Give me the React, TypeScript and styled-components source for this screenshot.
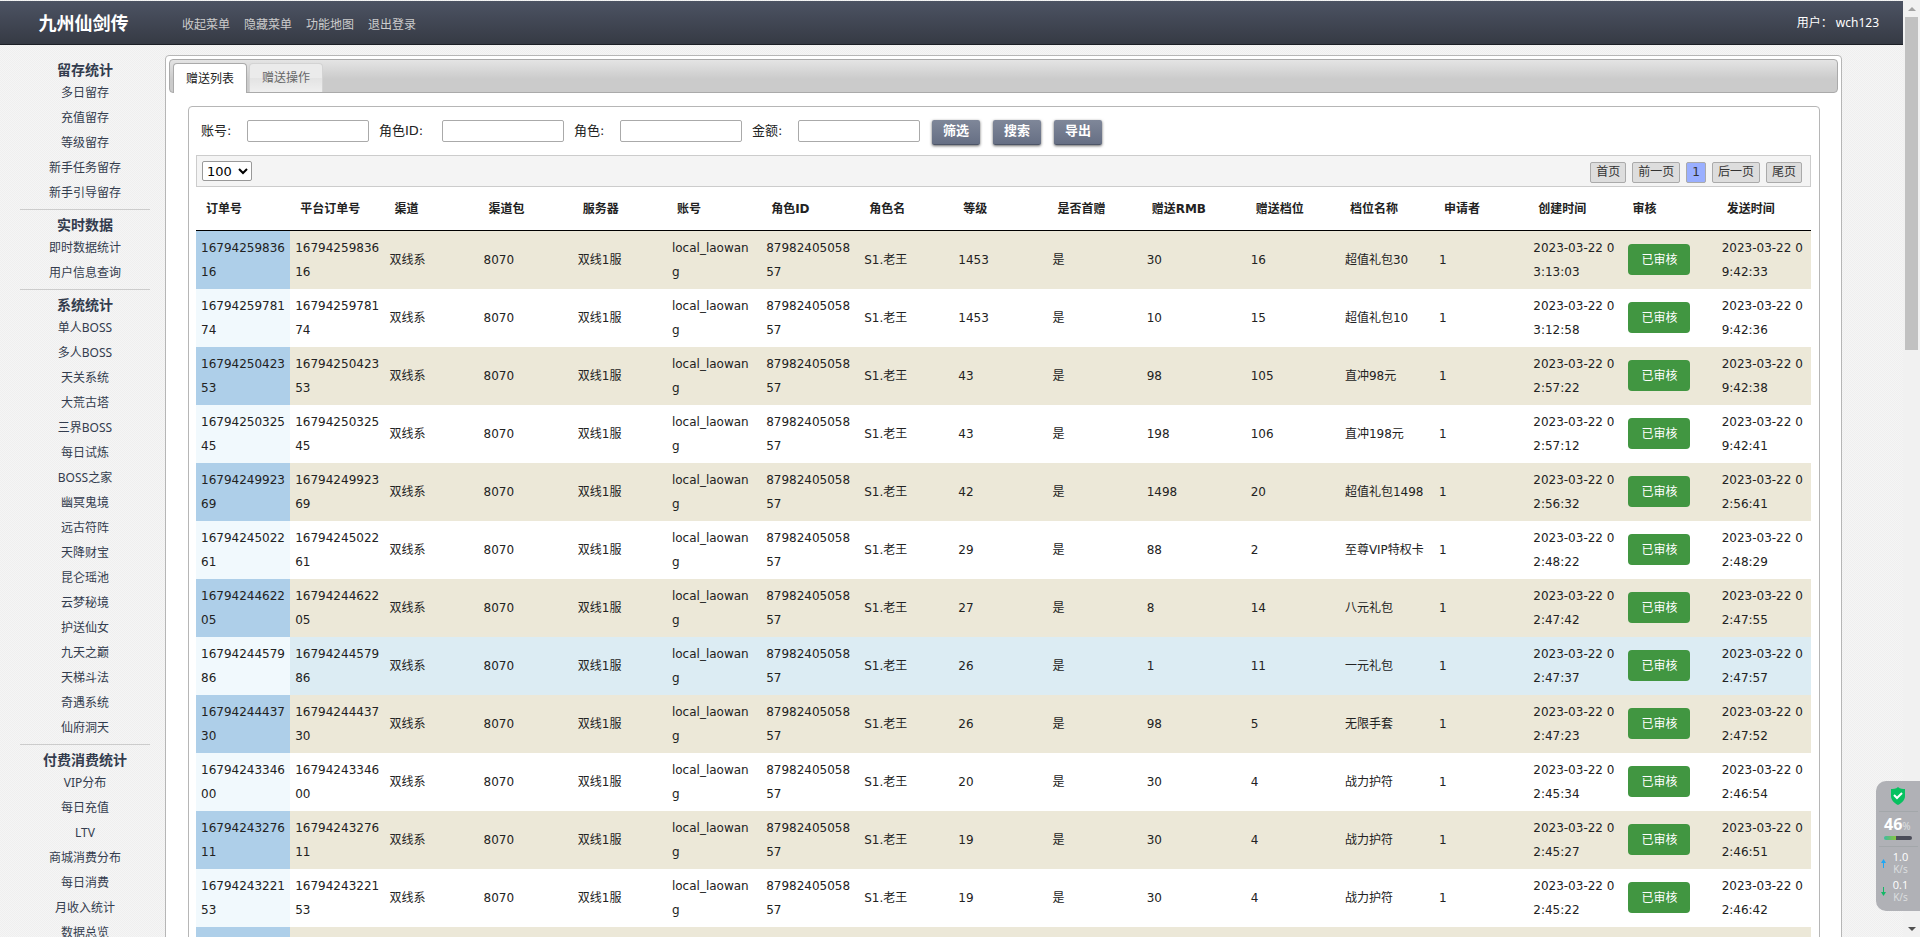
import React from 'react';
import styled, { createGlobalStyle } from 'styled-components';

const GlobalStyle = createGlobalStyle`
  * { box-sizing: border-box; }
  body {
    margin: 0;
    background: #f3f3f3;
    font-family: 'Noto Sans', 'Noto Sans CJK SC', sans-serif;
    font-size: 12px;
    color: #222;
  }
  a { color: inherit; text-decoration: none; }
`;

const wide = "'DejaVu Sans', 'Noto Sans CJK SC', sans-serif";

const Screen = styled.div`
  display: grid;
  grid-template-columns: minmax(0, 1fr) 17px;
  height: 100vh;
  overflow: hidden;
`;

const Page = styled.div`
  height: 100vh;
  padding-top: 1px;
  overflow: hidden;
  background: repeating-conic-gradient(#f5f5f5 0 25%, #efefef 0 50%) 0 0 / 2px 2px;
`;

const Header = styled.header`
  display: flex;
  align-items: center;
  height: 44px;
  padding: 0 24px 0 19px;
  border-bottom: 1px solid #1c1f26;
  background: linear-gradient(#4c5363, #363a44);
  color: #fff;
`;

const Brand = styled.h1`
  width: 129px;
  margin: 0;
  font-size: 18px;
  line-height: 24px;
  text-align: center;
`;

const TopNav = styled.nav`
  display: flex;
  flex: 1;
  gap: 14px;
  padding: 4px 0 0 34px;
  line-height: 18px;
  color: #ccc;
`;

const User = styled.div`
  line-height: 18px;
`;

const Body = styled.div`
  display: grid;
  grid-template-columns: 165px minmax(0, 1fr);
  padding-right: 61px;
`;

const Sidebar = styled.nav`
  padding: 15px 15px 0 20px;
  color: #333c4e;
  text-align: center;
`;

const Group = styled.section`
  margin-bottom: 5px;
  padding-bottom: 4px;
  border-bottom: 1px solid #ccc;
`;

const GroupTitle = styled.h2`
  margin: 0;
  font-size: 14px;
  line-height: 20px;
`;

const MenuLink = styled.a`
  display: block;
  line-height: 25px;
`;

const Panel = styled.main`
  margin-top: 10px;
  padding: 3px;
  border: 1px solid #b6b6b6;
  border-radius: 4px;
  background: #fff;
`;

const TabBar = styled.div`
  display: flex;
  gap: 2px;
  height: 34px;
  padding: 3px 3px 0;
  border: 1px solid #aaa;
  border-radius: 4px;
  background: linear-gradient(#e4e4e4, #cbcbcb 60%, #cbcbcb);
`;

const Tab = styled.button<{ $active?: boolean }>`
  height: ${(p) => (p.$active ? 30 : 29)}px;
  padding: 0 12px;
  border: 1px solid ${(p) => (p.$active ? '#aaa' : '#d3d3d3')};
  border-bottom: 0;
  border-radius: 4px 4px 0 0;
  background: ${(p) => (p.$active ? '#fff' : 'linear-gradient(#ebebeb 50%, #e3e3e3 50%, #efefef)')};
  color: ${(p) => (p.$active ? '#212121' : '#666')};
  font: inherit;
  line-height: 26px;
`;

const Card = styled.section`
  margin: 13px 18px 0 19px;
  padding: 13px 8px 20px 7px;
  border: 1px solid #b6b6b6;
  border-radius: 4px;
`;

const Filters = styled.form`
  display: flex;
  gap: 10px;
  height: 35px;
  padding-left: 5px;
  font-family: ${wide};
  font-size: 13px;
`;

const Field = styled.label<{ $label: number }>`
  display: grid;
  grid-template-columns: ${(p) => p.$label}px 122px;
  height: 22px;
  line-height: 22px;
`;

const TextInput = styled.input`
  width: 100%;
  height: 22px;
  padding: 0 4px;
  border: 1px solid #aaa;
  border-radius: 2px;
  background: #fff;
`;

const Actions = styled.div`
  display: flex;
  gap: 13px;
  padding-left: 2px;
`;

const ActionButton = styled.button`
  width: 48px;
  height: 25px;
  padding: 0 0 2px;
  border: 0;
  border-bottom: 1px solid #4d5567;
  border-radius: 2px;
  background: linear-gradient(#7f8799, #666f84);
  box-shadow: 0 1px 3px rgba(0, 0, 0, 0.6);
  color: #fff;
  font: bold 13px/22px ${wide};
`;

const Toolbar = styled.div`
  display: flex;
  align-items: center;
  justify-content: space-between;
  height: 32px;
  padding: 0 8px 0 5px;
  border: 1px solid #ccc;
  background: #f4f4f4;
`;

const PageSize = styled.select`
  width: 50px;
  height: 20px;
  padding: 0;
  border: 1px solid #999;
  border-radius: 2px;
  background: #fff;
  color: #000;
  font: 13px ${wide};
`;

const Pager = styled.nav`
  display: flex;
  gap: 6px;
  padding-top: 2px;
`;

const PagerButton = styled.button<{ $current?: boolean }>`
  height: 21px;
  padding: 0 5px;
  border: 1px solid #aaa;
  border-radius: 2px;
  background: ${(p) => (p.$current ? '#9aafff' : '#ddd')};
  color: #333;
  font: 12px/18px ${wide};
`;

const Table = styled.table`
  width: 100%;
  table-layout: fixed;
  border-collapse: separate;
  border-spacing: 0;
  font-family: ${wide};
  line-height: 24px;
`;

const HeadCell = styled.th`
  height: 44px;
  padding: 0 0 0 10px;
  border-bottom: 1px solid #000;
  text-align: left;
  white-space: nowrap;
`;

const Cell = styled.td`
  height: 58px;
  padding: 5px;
  word-break: break-all;
`;

const Row = styled.tr<{ $hover?: boolean }>`
  background: ${(p) => (p.$hover ? '#dcecf3' : '#fff')};
  & > td:first-child { background: #f1f9fd; }
  &:nth-child(odd) { background: #ece8d8; }
  &:nth-child(odd) > td:first-child { background: #aecfe9; }
`;

const Approved = styled.button`
  display: block;
  height: 31px;
  margin: 0 0 1px 1px;
  padding: 0 13px;
  border: 0;
  border-radius: 4px;
  background: #419641;
  color: #fff;
  font: 12px/30px ${wide};
`;

const ScrollTrack = styled.div`
  display: flex;
  flex-direction: column;
  align-items: center;
  padding: 7px 0 6px;
  background: #f1f1f1;
`;

const Thumb = styled.div`
  width: 13px;
  height: 36%;
  margin: 6px 0 auto;
  background: #c1c1c1;
`;

const Monitor = styled.aside`
  position: fixed;
  right: 0;
  bottom: 26px;
  width: 44px;
  height: 130px;
  padding: 6px 2px 0 3px;
  border-radius: 10px 0 0 10px;
  background: #b0b1b6;
  color: #fff;
  font-family: 'Open Sans', sans-serif;
`;

const Shield = styled.div`
  display: flex;
  justify-content: center;
  height: 25px;
  padding-right: 2px;
  border-bottom: 1px solid #a3a7aa;
`;

const Usage = styled.div`
  height: 35px;
  padding: 3px 6px 0 5px;
  border-bottom: 1px solid #a3a7aa;
  font-size: 16px;
  font-weight: bold;
  line-height: 19px;
  white-space: nowrap;
`;

const Unit = styled.small`
  color: #dfe0e2;
  font-size: 10px;
  font-weight: normal;
`;

const Meter = styled.div`
  height: 4px;
  border-radius: 2px;
  background: linear-gradient(90deg, #3dbba0, #8bc540 43%, #4a4c58 43%);
`;

const Speed = styled.div`
  display: grid;
  grid-template-columns: 8px 1fr;
  align-items: center;
  height: 28px;
  padding: 4px 6px 0 2px;
  font-size: 11px;
  line-height: 12px;
  text-align: center;
  & small { display: block; color: #dfe0e2; font-size: 10px; line-height: 12px; }
`;

const groups = [
  { title: '留存统计', items: ['多日留存', '充值留存', '等级留存', '新手任务留存', '新手引导留存'] },
  { title: '实时数据', items: ['即时数据统计', '用户信息查询'] },
  {
    title: '系统统计',
    items: ['单人BOSS', '多人BOSS', '天关系统', '大荒古塔', '三界BOSS', '每日试炼', 'BOSS之家', '幽冥鬼境', '远古符阵', '天降财宝', '昆仑瑶池', '云梦秘境', '护送仙女', '九天之巅', '天梯斗法', '奇遇系统', '仙府洞天'],
  },
  { title: '付费消费统计', items: ['VIP分布', '每日充值', 'LTV', '商城消费分布', '每日消费', '月收入统计', '数据总览'] },
];

const columns: { name: string; width?: number }[] = [
  { name: '订单号' }, { name: '平台订单号' }, { name: '渠道' }, { name: '渠道包' }, { name: '服务器' },
  { name: '账号' }, { name: '角色ID', width: 98 }, { name: '角色名' }, { name: '等级' }, { name: '是否首赠' },
  { name: '赠送RMB', width: 104 }, { name: '赠送档位' }, { name: '档位名称' }, { name: '申请者' },
  { name: '创建时间' }, { name: '审核' }, { name: '发送时间' },
];

// order id, level, RMB, tier, tier name, created, sent
const orders = [
  ['1679425983616', '1453', '30', '16', '超值礼包30', '03:13:03', '09:42:33'],
  ['1679425978174', '1453', '10', '15', '超值礼包10', '03:12:58', '09:42:36'],
  ['1679425042353', '43', '98', '105', '直冲98元', '02:57:22', '09:42:38'],
  ['1679425032545', '43', '198', '106', '直冲198元', '02:57:12', '09:42:41'],
  ['1679424992369', '42', '1498', '20', '超值礼包1498', '02:56:32', '02:56:41'],
  ['1679424502261', '29', '88', '2', '至尊VIP特权卡', '02:48:22', '02:48:29'],
  ['1679424462205', '27', '8', '14', '八元礼包', '02:47:42', '02:47:55'],
  ['1679424457986', '26', '1', '11', '一元礼包', '02:47:37', '02:47:57'],
  ['1679424443730', '26', '98', '5', '无限手套', '02:47:23', '02:47:52'],
  ['1679424334600', '20', '30', '4', '战力护符', '02:45:34', '02:46:54'],
  ['1679424327611', '19', '30', '4', '战力护符', '02:45:27', '02:46:51'],
  ['1679424322153', '19', '30', '4', '战力护符', '02:45:22', '02:46:42'],
];

const day = '2023-03-22 ';

export default function App() {
  return (
    <Screen>
      <GlobalStyle />
      <Page>
        <Header>
          <Brand>九州仙剑传</Brand>
          <TopNav>
            {['收起菜单', '隐藏菜单', '功能地图', '退出登录'].map((t) => <a href="#" key={t}>{t}</a>)}
          </TopNav>
          <User>用户： wch123</User>
        </Header>
        <Body>
          <Sidebar>
            {groups.map((g) => (
              <Group key={g.title}>
                <GroupTitle>{g.title}</GroupTitle>
                {g.items.map((i) => <MenuLink href="#" key={i}>{i}</MenuLink>)}
              </Group>
            ))}
          </Sidebar>
          <Panel>
            <TabBar>
              <Tab $active>赠送列表</Tab>
              <Tab>赠送操作</Tab>
            </TabBar>
            <Card>
              <Filters onSubmit={(e) => e.preventDefault()}>
                <Field $label={46}>账号:<TextInput /></Field>
                <Field $label={63}>角色ID:<TextInput /></Field>
                <Field $label={46}>角色:<TextInput /></Field>
                <Field $label={46}>金额:<TextInput /></Field>
                <Actions>
                  <ActionButton type="button">筛选</ActionButton>
                  <ActionButton type="button">搜索</ActionButton>
                  <ActionButton type="button">导出</ActionButton>
                </Actions>
              </Filters>
              <Toolbar>
                <PageSize aria-label="每页条数"><option>100</option></PageSize>
                <Pager>
                  <PagerButton>首页</PagerButton>
                  <PagerButton>前一页</PagerButton>
                  <PagerButton $current>1</PagerButton>
                  <PagerButton>后一页</PagerButton>
                  <PagerButton>尾页</PagerButton>
                </Pager>
              </Toolbar>
              <Table>
                <colgroup>
                  {columns.map((c) => <col key={c.name} width={c.width} />)}
                </colgroup>
                <thead>
                  <tr>{columns.map((c) => <HeadCell key={c.name}>{c.name}</HeadCell>)}</tr>
                </thead>
                <tbody>
                  {orders.map(([id, level, rmb, tier, tierName, created, sent], i) => (
                    <Row key={id} $hover={i === 7}>
                      <Cell>{id}</Cell>
                      <Cell>{id}</Cell>
                      <Cell>双线系</Cell>
                      <Cell>8070</Cell>
                      <Cell>双线1服</Cell>
                      <Cell>local_laowang</Cell>
                      <Cell>8798240505857</Cell>
                      <Cell>S1.老王</Cell>
                      <Cell>{level}</Cell>
                      <Cell>是</Cell>
                      <Cell>{rmb}</Cell>
                      <Cell>{tier}</Cell>
                      <Cell>{tierName}</Cell>
                      <Cell>1</Cell>
                      <Cell>{day + created}</Cell>
                      <Cell><Approved>已审核</Approved></Cell>
                      <Cell>{day + sent}</Cell>
                    </Row>
                  ))}
                  <Row>
                    {columns.map((c) => <Cell key={c.name} />)}
                  </Row>
                </tbody>
              </Table>
            </Card>
          </Panel>
        </Body>
      </Page>
      <ScrollTrack aria-hidden="true">
        <svg width="8" height="4" viewBox="0 0 8 4"><path d="M4 0L8 4H0Z" fill="#a3a3a3" /></svg>
        <Thumb />
        <svg width="8" height="4" viewBox="0 0 8 4"><path d="M0 0H8L4 4Z" fill="#505050" /></svg>
      </ScrollTrack>
      <Monitor>
        <Shield>
          <svg width="16" height="18" viewBox="0 0 16 18">
            <path d="M8 0C10 2 13 2 15 2V9C15 13 12 16 8 18C4 16 1 13 1 9V2C3 2 6 2 8 0Z" fill="#07c160" />
            <path d="M4 8L7 11L12 6" fill="none" stroke="#fff" strokeWidth="2" />
          </svg>
        </Shield>
        <Usage>
          46<Unit>%</Unit>
          <Meter />
        </Usage>
        <Speed>
          <svg width="5" height="9" viewBox="0 0 5 9"><path d="M2 9V4H0L2.500 0L5 4H3V9Z" fill="#1ea7f5" /></svg>
          <div>1.0<small>K/s</small></div>
        </Speed>
        <Speed>
          <svg width="5" height="9" viewBox="0 0 5 9"><path d="M2 0V5H0L2.500 9L5 5H3V0Z" fill="#14b866" /></svg>
          <div>0.1<small>K/s</small></div>
        </Speed>
      </Monitor>
    </Screen>
  );
}
